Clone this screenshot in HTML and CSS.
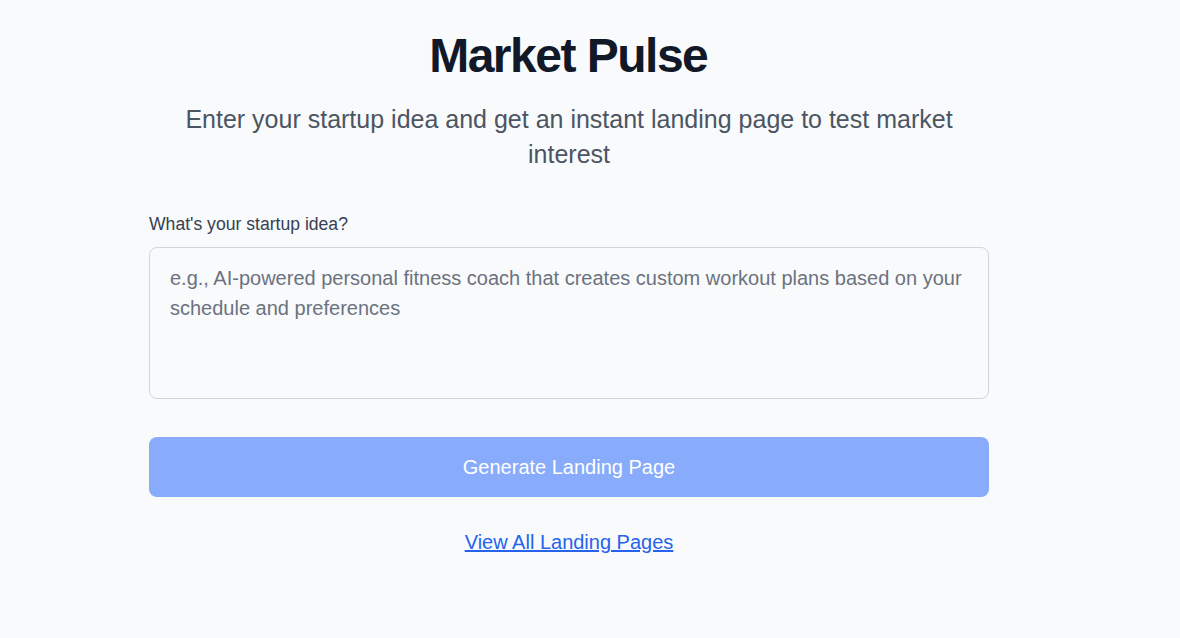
FILE: index.html
```html
<!DOCTYPE html>
<html lang="en">
<head>
<meta charset="utf-8">
<title>Market Pulse</title>
<link rel="stylesheet" href="styles.css">
</head>
<body>
<main class="page">
  <div class="container">
    <h1 class="title">Market Pulse</h1>
    <p class="subtitle">Enter your startup idea and get an instant landing page to test market interest</p>
    <form class="form">
      <label class="label" for="idea">What's your startup idea?</label>
      <textarea id="idea" class="textarea" placeholder="e.g., AI-powered personal fitness coach that creates custom workout plans based on your schedule and preferences"></textarea>
      <button type="button" class="button">Generate Landing Page</button>
    </form>
    <div class="link-row"><a class="link" href="#">View All Landing Pages</a></div>
  </div>
</main>
</body>
</html>
```

FILE: styles.css
```css
* { box-sizing: border-box; }
html, body { margin: 0; padding: 0; }
body {
  background: #f9fafb;
  font-family: "Liberation Sans", Arial, sans-serif;
  color: #111827;
  min-height: 638px;
}
.page {
  display: flex;
  justify-content: center;
  padding: 32px 42px 0 0;
}
.container {
  width: 840px;
  display: flex;
  flex-direction: column;
}
.title {
  margin: 0;
  font-size: 48px;
  line-height: 48px;
  font-weight: 700;
  letter-spacing: -1.5px;
  text-indent: -1.5px;
  text-align: center;
  color: #111827;
}
.subtitle {
  margin: 22px 0 0;
  font-size: 25px;
  line-height: 35px;
  text-align: center;
  color: #4b5563;
}
.form {
  margin-top: 40px;
  display: flex;
  flex-direction: column;
}
.label {
  font-size: 17.6px;
  line-height: 24px;
  color: #374151;
  margin-bottom: 11px;
}
.textarea {
  width: 100%;
  height: 152px;
  border: 1px solid #d1d5db;
  border-radius: 8px;
  background: #f9fafb;
  padding: 15px 20px;
  font-family: "Liberation Sans", Arial, sans-serif;
  font-size: 20px;
  line-height: 30px;
  color: #111827;
  resize: none;
  outline: none;
}
.textarea::placeholder { color: #6b7280; opacity: 1; }
.button {
  margin-top: 38px;
  height: 60px;
  border: none;
  border-radius: 8px;
  background: #88abfb;
  color: #ffffff;
  font-family: "Liberation Sans", Arial, sans-serif;
  font-size: 20px;
}
.link-row {
  margin-top: 30px;
  text-align: center;
}
.link {
  font-size: 20px;
  line-height: 30px;
  color: #2563eb;
  text-decoration: underline;
}
```
